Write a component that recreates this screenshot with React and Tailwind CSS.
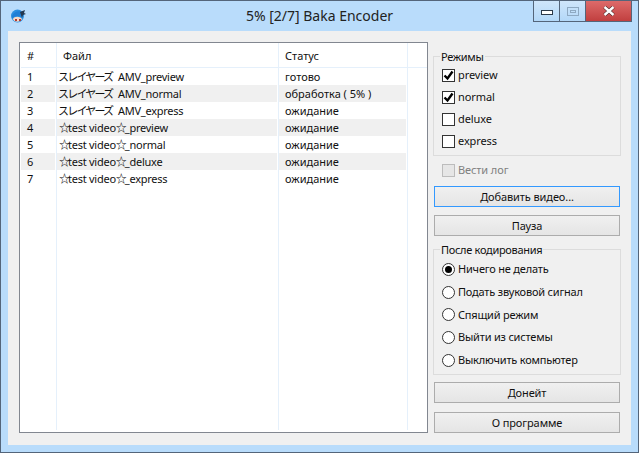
const files = [
  { n: 1, file: ["スレイヤーズ", " AMV_preview"], status: "готово" },
  { n: 2, file: ["スレイヤーズ", " AMV_normal"], status: "обработка ( 5% )" },
  { n: 3, file: ["スレイヤーズ", " AMV_express"], status: "ожидание" },
  { n: 4, file: ["☆", "test video", "☆", "_preview"], status: "ожидание" },
  { n: 5, file: ["☆", "test video", "☆", "_normal"], status: "ожидание" },
  { n: 6, file: ["☆", "test video", "☆", "_deluxe"], status: "ожидание" },
  { n: 7, file: ["☆", "test video", "☆", "_express"], status: "ожидание" },
];

const modes = [
  { label: "preview", checked: true },
  { label: "normal", checked: true },
  { label: "deluxe", checked: false },
  { label: "express", checked: false },
];

const afterActions = [
  "Ничего не делать",
  "Подать звуковой сигнал",
  "Спящий режим",
  "Выйти из системы",
  "Выключить компьютер",
];

const cols = "grid grid-cols-[36px_222px_129px_1fr]";

function AppIcon() {
  return (
    <svg width="17" height="16" viewBox="0 0 17 16" className="mt-[7px] ml-[9px]">
      <circle cx="7.5" cy="8" r="6.5" fill="#2b8fe0" />
      <path d="M3 11c1-3 7-3 9 0-1 3-8 4-9 0z" fill="#f6d9c6" />
      <path d="M2 8c2-5 8-6 11-3l-2 4C8 7 5 8 2 10z" fill="#1f7fd6" />
      <path d="M10 4l5-2-1 3 2 1-3 1-1 3-1-3z" fill="#24384f" />
      <rect x="5" y="11" width="2" height="2" fill="#b3392f" />
      <rect x="9" y="11" width="2" height="2" fill="#b3392f" />
    </svg>
  );
}

function WindowControls() {
  return (
    <div className="mr-[6px] flex h-[21px] justify-self-end border-x border-b border-[#54657a]">
      <div className="flex w-[26px] items-center justify-center border-r border-[#54657a] bg-gradient-to-b from-[#cfe6fb] to-[#b3d8f8]">
        <div className="mt-[3px] h-[5px] w-[12px] border border-[#2c3a4a] bg-white" />
      </div>
      <div className="flex w-[26px] items-center justify-center border-r border-[#54657a] bg-gradient-to-b from-[#cfe6fb] to-[#b3d8f8]">
        <div className="flex h-[9px] w-[12px] items-center justify-center border border-[#8ea9c2]">
          <div className="h-[3px] w-[6px] border border-[#8ea9c2]" />
        </div>
      </div>
      <div className="flex w-[45px] items-center justify-center bg-gradient-to-b from-[#dd6a6a] to-[#c13f3f]">
        <svg width="12" height="10" viewBox="0 0 12 10">
          <path d="M1.5 1l9 8M10.5 1l-9 8" stroke="#3a2222" strokeWidth="3.6" />
          <path d="M1.5 1l9 8M10.5 1l-9 8" stroke="#ffffff" strokeWidth="2.4" />
        </svg>
      </div>
    </div>
  );
}

function Cell({ striped, className, children }) {
  return (
    <div className="border-r border-[#e5f0fb] pr-px">
      <div className={`h-[17px] leading-[17px] whitespace-nowrap ${striped ? "bg-[#f0f0f0]" : ""} ${className}`}>
        {children}
      </div>
    </div>
  );
}

// wide glyphs are squeezed a lot, latin runs only slightly
function FileName({ parts }) {
  return parts.map((part, i) => {
    let cls = "tracking-[-0.25px]";
    if (part === "☆") cls = "tracking-[-2px] text-[#000]";
    else if (part.startsWith("ス")) cls = "mr-[3px] tracking-[-1.8px]";
    else if (i === 0) cls = "tracking-[-0.25px]";
    return (
      <span key={i} className={cls}>
        {part}
      </span>
    );
  });
}

function FileList() {
  return (
    <div className="flex h-[391px] w-[409px] flex-col border border-[#828790] bg-white pl-px text-[#111]">
      <div className={`${cols} h-[25px] border-b border-[#e5f0fb]`}>
        <div className="border-r border-[#e5f0fb] pl-[6px] leading-[26px]">#</div>
        <div className="border-r border-[#e5f0fb] pl-[6px] leading-[26px]">Файл</div>
        <div className="border-r border-[#e5f0fb] pl-[6px] leading-[26px]">Статус</div>
      </div>
      {files.map((row, i) => (
        <div key={row.n} className={cols}>
          <Cell striped={i % 2 === 1} className="pl-[6px]">{row.n}</Cell>
          <Cell striped={i % 2 === 1} className={row.n > 3 ? "pl-[2px]" : "pl-px"}><FileName parts={row.file} /></Cell>
          <Cell striped={i % 2 === 1} className="pl-[6px]">{row.status}</Cell>
        </div>
      ))}
      <div className={`${cols} mb-[2px] flex-1`}>
        <div className="border-r border-[#e5f0fb]" />
        <div className="border-r border-[#e5f0fb]" />
        <div className="border-r border-[#e5f0fb]" />
      </div>
    </div>
  );
}

function Checkbox({ label, checked, disabled }) {
  return (
    <div className={`flex h-[22px] items-center gap-[3px] ${disabled ? "text-[#808080]" : "text-[#111]"}`}>
      <div className={`flex size-[13px] items-center justify-center border ${disabled ? "border-[#bcbcbc] bg-[#e6e6e6]" : "border-[#333] bg-white"}`}>
        {checked && (
          <svg width="11" height="11" viewBox="0 0 11 11">
            <path d="M1.5 5.5l3 3 5-7" fill="none" stroke="#000" strokeWidth="2.4" />
          </svg>
        )}
      </div>
      <span className="tracking-[-0.1px]">{label}</span>
    </div>
  );
}

function Radio({ label, selected }) {
  return (
    <div className="flex h-[22.75px] items-center gap-[3px] text-[#111]">
      <div className="flex size-[13px] items-center justify-center rounded-full border border-[#333] bg-white">
        {selected && <div className="size-[7px] rounded-full bg-black" />}
      </div>
      <span className="tracking-[-0.2px]">{label}</span>
    </div>
  );
}

function Button({ focused, className = "", children }) {
  return (
    <button
      type="button"
      className={`mx-px block h-[21px] w-[186px] border bg-gradient-to-b from-[#f0f0f0] to-[#e5e5e5] leading-[18px] tracking-[-0.1px] text-[#111] ${
        focused ? "border-[#3399ff]" : "border-[#acacac]"
      } ${className}`}
    >
      {children}
    </button>
  );
}

function Group({ title, className = "", children }) {
  return (
    <fieldset className={`w-[188px] border border-[#dcdcdc] ${className}`}>
      <legend className="-ml-[2px] px-px leading-[13px] tracking-[-0.3px] text-[#111]">{title}</legend>
      {children}
    </fieldset>
  );
}

export default function App() {
  return (
    <div
      className="flex h-[453px] w-[639px] flex-col border border-[#54657a] bg-[#b9dcfb] text-[11px]"
      style={{ fontFamily: '"Noto Sans", "Noto Sans CJK JP", "DejaVu Sans", sans-serif' }}
    >
      <div className="grid h-[30px] grid-cols-[1fr_auto_1fr] items-start">
        <AppIcon />
        <div className="pt-[5px] text-[14px] leading-[20px] text-[#222]">5% [2/7] Baka Encoder</div>
        <WindowControls />
      </div>
      <div className="mx-[7px] mb-[7px] flex flex-1 gap-[5px] bg-[#f0f0f0] pt-[11px] pl-[11px]">
        <FileList />
        <div className="flex flex-col">
          <Group title="Режимы" className="mt-[8px] h-[106px] pt-[1px] pl-[8px]">
            {modes.map((m) => (
              <Checkbox key={m.label} label={m.label} checked={m.checked} />
            ))}
          </Group>
          <div className="mt-[3px] pl-[9px]">
            <Checkbox label="Вести лог" disabled />
          </div>
          <Button focused className="mt-[5px]">Добавить видео...</Button>
          <Button className="mt-[8px]">Пауза</Button>
          <Group title="После кодирования" className="mt-[7px] h-[132px] pt-[2px] pl-[8px]">
            {afterActions.map((label, i) => (
              <Radio key={label} label={label} selected={i === 0} />
            ))}
          </Group>
          <Button className="mt-[7px]">Донейт</Button>
          <Button className="mt-[9px]">О программе</Button>
        </div>
      </div>
    </div>
  );
}
